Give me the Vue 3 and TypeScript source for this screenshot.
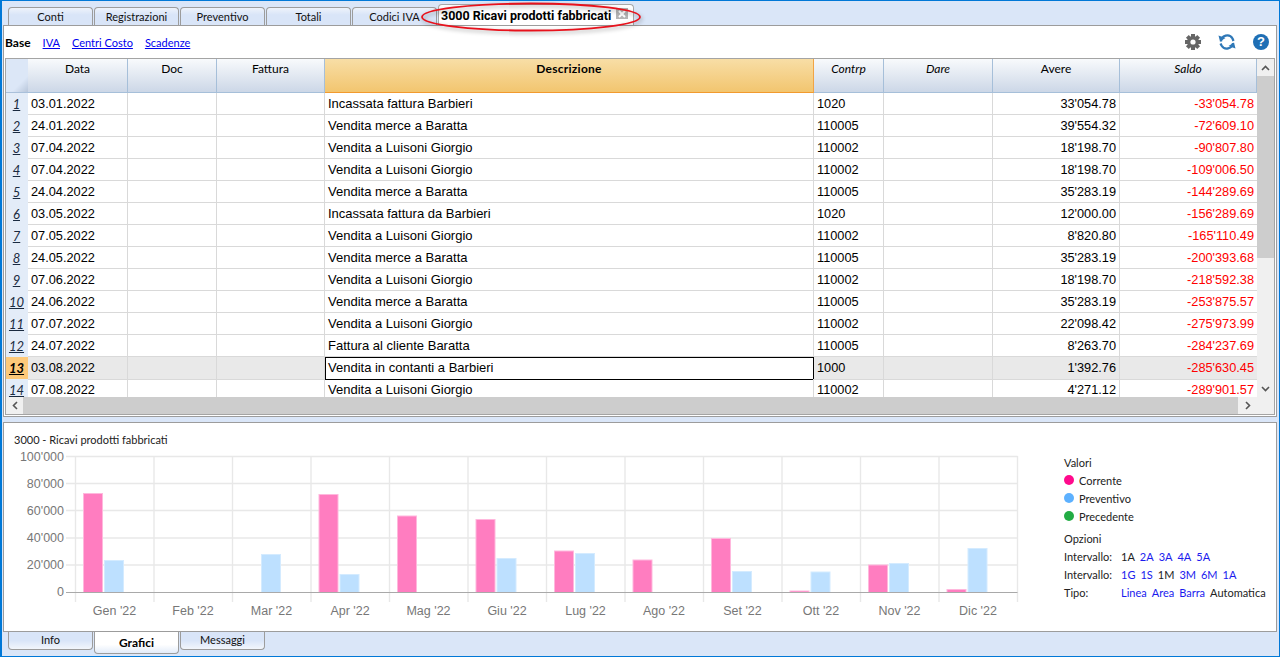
<script setup lang="ts">
const tabs = ['Conti', 'Registrazioni', 'Preventivo', 'Totali', 'Codici IVA']
const bottomTabs = ['Info', 'Grafici', 'Messaggi']

const columns = [
  { label: 'Data', cls: '' },
  { label: 'Doc', cls: '' },
  { label: 'Fattura', cls: '' },
  { label: 'Descrizione', cls: 'desc' },
  { label: 'Contrp', cls: 'ital' },
  { label: 'Dare', cls: 'ital' },
  { label: 'Avere', cls: '' },
  { label: 'Saldo', cls: 'ital' },
]

const rows = [
  ['03.01.2022', 'Incassata fattura Barbieri', '1020', "33'054.78", "-33'054.78"],
  ['24.01.2022', 'Vendita merce a Baratta', '110005', "39'554.32", "-72'609.10"],
  ['07.04.2022', 'Vendita a Luisoni Giorgio', '110002', "18'198.70", "-90'807.80"],
  ['07.04.2022', 'Vendita a Luisoni Giorgio', '110002', "18'198.70", "-109'006.50"],
  ['24.04.2022', 'Vendita merce a Baratta', '110005', "35'283.19", "-144'289.69"],
  ['03.05.2022', 'Incassata fattura da Barbieri', '1020', "12'000.00", "-156'289.69"],
  ['07.05.2022', 'Vendita a Luisoni Giorgio', '110002', "8'820.80", "-165'110.49"],
  ['24.05.2022', 'Vendita merce a Baratta', '110005', "35'283.19", "-200'393.68"],
  ['07.06.2022', 'Vendita a Luisoni Giorgio', '110002', "18'198.70", "-218'592.38"],
  ['24.06.2022', 'Vendita merce a Baratta', '110005', "35'283.19", "-253'875.57"],
  ['07.07.2022', 'Vendita a Luisoni Giorgio', '110002', "22'098.42", "-275'973.99"],
  ['24.07.2022', 'Fattura al cliente Baratta', '110005', "8'263.70", "-284'237.69"],
  ['03.08.2022', 'Vendita in contanti a Barbieri', '1000', "1'392.76", "-285'630.45"],
  ['07.08.2022', 'Vendita a Luisoni Giorgio', '110002', "4'271.12", "-289'901.57"],
]

// chart uses page coordinates through the svg viewBox
const baseY = 593.5
const months = [
  { name: "Gen '22", pink: 494.5, blue: 561.5 },
  { name: "Feb '22", pink: 0, blue: 0 },
  { name: "Mar '22", pink: 0, blue: 555.5 },
  { name: "Apr '22", pink: 495.5, blue: 575.5 },
  { name: "Mag '22", pink: 517, blue: 0 },
  { name: "Giu '22", pink: 520.5, blue: 559.5 },
  { name: "Lug '22", pink: 552, blue: 554.5 },
  { name: "Ago '22", pink: 561, blue: 0 },
  { name: "Set '22", pink: 539.5, blue: 572.5 },
  { name: "Ott '22", pink: 592, blue: 573 },
  { name: "Nov '22", pink: 566, blue: 564.5 },
  { name: "Dic '22", pink: 590.5, blue: 549.5 },
]
const yTicks = [
  { label: "100'000", y: 457.5 },
  { label: "80'000", y: 484.5 },
  { label: "60'000", y: 511.5 },
  { label: "40'000", y: 539 },
  { label: "20'000", y: 566 },
]
const gridX = Array.from({ length: 13 }, (_, i) => 75.5 + 78.5 * i)
</script>

<template>
  <div class="app">
    <div class="tabs">
      <div v-for="t in tabs" :key="t" class="tab">{{ t }}</div>
      <div class="tab active">
        <span>3000 Ricavi prodotti fabbricati</span>
        <span class="close">
          <svg width="8" height="8" viewBox="0 0 8 8"><path d="M1 1l6 6M7 1l-6 6" stroke="#fff" stroke-width="2" /></svg>
        </span>
      </div>
    </div>

    <div class="panel top">
      <div class="toolbar">
        <b>Base</b>
        <a class="link">IVA</a>
        <a class="link">Centri Costo</a>
        <a class="link">Scadenze</a>
        <div class="icons">
          <svg width="18" height="18" viewBox="0 0 18 18">
            <g fill="#666">
              <circle cx="9" cy="9" r="6" />
              <rect x="7" y="1" width="4" height="16" />
              <rect x="7" y="1" width="4" height="16" transform="rotate(45 9 9)" />
              <rect x="7" y="1" width="4" height="16" transform="rotate(90 9 9)" />
              <rect x="7" y="1" width="4" height="16" transform="rotate(135 9 9)" />
            </g>
            <circle cx="9" cy="9" r="2.6" fill="#fff" />
          </svg>
          <svg width="18" height="18" viewBox="0 0 18 18">
            <g fill="none" stroke="#2f78b7" stroke-width="2.3">
              <path d="M3 8.5A6.2 6.2 0 0 1 14.5 5.5L15.5 8" />
              <path d="M15 10A6.2 6.2 0 0 1 3.5 12.5L2.5 10.5" />
            </g>
            <path d="M0.5 2.5L7.5 5L2 8.5Z M17.5 15.5L10.5 13L16 9.5Z" fill="#2f78b7" />
          </svg>
          <span class="help">?</span>
        </div>
      </div>

      <div class="table">
        <div class="table-main">
          <div class="viewport">
            <div class="row head">
              <div class="corner"></div>
              <div v-for="c in columns" :key="c.label" class="hcell" :class="c.cls">{{ c.label }}</div>
            </div>
            <div v-for="(r, i) in rows" :key="i" class="row" :class="{ current: i === 12 }">
              <div class="rownum">{{ i + 1 }}</div>
              <div class="cell">{{ r[0] }}</div>
              <div class="cell"></div>
              <div class="cell"></div>
              <div class="cell text" :class="{ focus: i === 12 }">{{ r[1] }}</div>
              <div class="cell">{{ r[2] }}</div>
              <div class="cell"></div>
              <div class="cell num">{{ r[3] }}</div>
              <div class="cell num neg">{{ r[4] }}</div>
            </div>
          </div>
          <div class="vscroll">
            <div class="arrow">
              <svg width="9" height="6" viewBox="0 0 9 6"><path d="M1 5l3.5-3.5L8 5" fill="none" stroke="#555" stroke-width="1.6" /></svg>
            </div>
            <div class="vtrack"><div class="vthumb"></div></div>
            <div class="arrow">
              <svg width="9" height="6" viewBox="0 0 9 6"><path d="M1 1l3.5 3.5L8 1" fill="none" stroke="#555" stroke-width="1.6" /></svg>
            </div>
          </div>
        </div>
        <div class="hscroll">
          <div class="arrow">
            <svg width="6" height="9" viewBox="0 0 6 9"><path d="M5 1L1.5 4.5 5 8" fill="none" stroke="#555" stroke-width="1.6" /></svg>
          </div>
          <div class="hthumb"></div>
          <div class="arrow wide">
            <svg width="6" height="9" viewBox="0 0 6 9"><path d="M1 1l3.5 3.5L1 8" fill="none" stroke="#555" stroke-width="1.6" /></svg>
          </div>
          <div class="scroll-corner"></div>
        </div>
      </div>
    </div>

    <div class="panel chart-panel">
      <div class="chart-col">
        <div class="chart-title">3000 - Ricavi prodotti fabbricati</div>
        <svg class="chart" width="1046" height="180" viewBox="4 450 1046 180">
          <line v-for="t in yTicks" :key="t.y" x1="66" :x2="1017.5" :y1="t.y" :y2="t.y" class="grid" />
          <line v-for="x in gridX" :key="x" :x1="x" :x2="x" y1="457" y2="603" class="grid" />
          <text v-for="t in yTicks" :key="t.label" x="64" :y="t.y + 4" text-anchor="end" class="axis">{{ t.label }}</text>
          <text x="64" :y="baseY + 3" text-anchor="end" class="axis">0</text>
          <g v-for="(m, i) in months" :key="m.name">
            <rect v-if="m.pink" :x="gridX[i] + 8" :y="m.pink" width="19" :height="baseY - m.pink" class="pink" />
            <rect v-if="m.blue" :x="gridX[i] + 29" :y="m.blue" width="19" :height="baseY - m.blue" class="blue" />
            <text :x="gridX[i] + 39" y="615.5" text-anchor="middle" class="axis">{{ m.name }}</text>
          </g>
          <line x1="66" x2="1017.5" :y1="baseY" :y2="baseY" class="zero" />
        </svg>
      </div>
      <div class="legend">
        <div class="lrow">Valori</div>
        <div class="lrow"><i class="dot" style="background: #ff0a8c"></i>Corrente</div>
        <div class="lrow"><i class="dot" style="background: #5db1ff"></i>Preventivo</div>
        <div class="lrow"><i class="dot" style="background: #22ac44"></i>Precedente</div>
        <div class="lrow opz">Opzioni</div>
        <div class="lrow">
          <span class="lbl">Intervallo:</span>
          <span class="opts"><span>1A</span><a>2A</a><a>3A</a><a>4A</a><a>5A</a></span>
        </div>
        <div class="lrow">
          <span class="lbl">Intervallo:</span>
          <span class="opts"><a>1G</a><a>1S</a><span>1M</span><a>3M</a><a>6M</a><a>1A</a></span>
        </div>
        <div class="lrow">
          <span class="lbl">Tipo:</span>
          <span class="opts"><a>Linea</a><a>Area</a><a>Barra</a><span>Automatica</span></span>
        </div>
      </div>
    </div>

    <div class="tabs bottom">
      <div v-for="t in bottomTabs" :key="t" class="btab" :class="{ active: t === 'Grafici' }">{{ t }}</div>
    </div>

    <svg class="ring" width="224" height="32" viewBox="0 0 224 32">
      <ellipse cx="110" cy="16" rx="109" ry="13.5" fill="none" stroke="#e8121c" stroke-width="1.8" />
    </svg>
  </div>
</template>

<style scoped>
.app {
  position: relative;
  width: 1280px;
  height: 657px;
  box-sizing: border-box;
  border: 1px solid #0078d7;
  border-left-width: 2px;
  background: #dae6f8;
  overflow: hidden;
  font: 11px Lato, sans-serif;
  color: #111;
  display: flex;
  flex-direction: column;
}
.tabs {
  display: flex;
  align-items: flex-end;
  gap: 1px;
  height: 24px;
  padding-left: 6px;
}
.tab {
  box-sizing: border-box;
  width: 85px;
  height: 18px;
  border: 1px solid #9c9c9c;
  border-bottom: 0;
  border-radius: 4px 4px 0 0;
  background: linear-gradient(#eef3fb, #d9e5f8 40%);
  text-align: center;
  line-height: 18px;
}
.tab.active {
  width: 196px;
  height: 21px;
  background: #fff;
  display: flex;
  align-items: center;
  justify-content: space-between;
  padding: 0 5px 0 2px;
  font: 700 12.5px Roboto, sans-serif;
  white-space: nowrap;
  border-color: #a8a8a8;
  color: #000;
}
.close {
  width: 12px;
  height: 11px;
  background: #b4b4b4;
  display: flex;
  align-items: center;
  justify-content: center;
  flex: none;
  margin-bottom: 3px;
}
.panel {
  box-sizing: border-box;
  margin-left: 1px;
  width: 1274px;
  border: 1px solid #9c9c9c;
  background: #fff;
}
.panel.top {
  height: 392px;
  padding: 0 1px;
}
.toolbar {
  height: 32px;
  display: flex;
  align-items: center;
  gap: 12px;
}
.toolbar b {
  font-size: 12px;
  color: #000;
}
.link {
  color: #0000ee;
  text-decoration: underline;
}
.icons {
  margin-left: auto;
  display: flex;
  align-items: center;
  gap: 16px;
  padding-right: 6px;
}
.help {
  width: 16px;
  height: 16px;
  margin-left: 1px;
  border-radius: 50%;
  background: #1f6fb5;
  color: #fff;
  font: 700 13px/16px "Liberation Sans", sans-serif;
  text-align: center;
}
.table {
  box-sizing: border-box;
  width: 1270px;
  height: 357px;
  border: 1px solid #a4a4a4;
  display: flex;
  flex-direction: column;
}
.table-main {
  display: flex;
  height: 338px;
}
.viewport {
  width: 1251px;
  overflow: hidden;
}
.row {
  display: grid;
  grid-template-columns: 22px 100px 89px 108px 489px 70px 109px 127px 137px;
  height: 22px;
  font: 12.75px/21px "Liberation Sans", sans-serif;
  color: #000;
}
.row.head {
  height: 34px;
  font: 12px/20px Lato, sans-serif;
}
.corner {
  border-bottom: 1px solid #a9c0da;
  background: linear-gradient(135deg, #dce7f7 70%, #b8c6da);
}
.hcell {
  box-sizing: border-box;
  height: 34px;
  text-align: center;
  background: linear-gradient(#f8fafc, #ccd7e7);
  border-right: 1px solid #a6bfd9;
  border-bottom: 1px solid #a6bfd9;
}
.hcell.ital {
  font-style: italic;
}
.hcell.desc {
  letter-spacing: 0.25px;
  font-weight: 700;
  background: linear-gradient(#f8dea6, #f2c56f);
  border-right-color: #f1a445;
  border-bottom-color: #f29a2e;
}
.rownum {
  box-sizing: border-box;
  background: #e3ecf8;
  font: italic 13px/22px Lato, sans-serif;
  text-decoration: underline;
  text-align: center;
  color: #1a2a40;
  padding-right: 1px;
}
.cell {
  box-sizing: border-box;
  padding: 0 3px;
  border-right: 1px solid #d9d9d9;
  border-bottom: 1px solid #d9d9d9;
  white-space: nowrap;
  overflow: hidden;
}
.cell.text {
  font-size: 13px;
}
.num {
  text-align: right;
}
.neg {
  color: #ff0000;
  border-right: 0;
}
.current .cell {
  background: #e9e9e9;
}
.current .rownum {
  background: #fdc97a;
  border-bottom: 1px solid #f19a2e;
  font-weight: 700;
  color: #000;
}
.current .focus {
  background: #fff;
  border: 1px solid #000;
  line-height: 19px;
  padding: 0 2px;
}
.vscroll {
  width: 17px;
  background: #f0f0f0;
  display: flex;
  flex-direction: column;
}
.arrow {
  height: 17px;
  width: 17px;
  flex: none;
  display: flex;
  align-items: center;
  justify-content: center;
}
.arrow.wide {
  width: 19px;
}
.vtrack {
  flex: 1;
}
.vthumb {
  height: 182px;
  background: #cdcdcd;
}
.hscroll {
  height: 17px;
  display: flex;
  background: #f0f0f0;
}
.hthumb {
  flex: 1;
  background: #cdcdcd;
}
.scroll-corner {
  width: 17px;
}
.chart-panel {
  margin-top: 5px;
  height: 210px;
  display: flex;
}
.chart-col {
  width: 1060px;
}
.chart-title {
  height: 26px;
  padding: 9px 0 0 10px;
  box-sizing: border-box;
  line-height: 16px;
  color: #222;
}
.chart {
  display: block;
  font-family: "Liberation Sans", sans-serif;
}
.grid {
  stroke: #e8e8e8;
  stroke-width: 1.4;
}
.zero {
  stroke: #a9a9a9;
  stroke-width: 1.2;
}
.axis {
  font-size: 12.5px;
  fill: #777;
}
.pink {
  fill: #ff7dc0;
  stroke: #ffb8dd;
  stroke-width: 1;
}
.blue {
  fill: #bde0ff;
  stroke: #d4ebff;
  stroke-width: 1;
}
.legend {
  padding-top: 30px;
  color: #222;
  white-space: nowrap;
}
.lrow {
  display: flex;
  align-items: center;
  height: 18px;
}
.lrow.opz {
  margin-top: 4px;
}
.dot {
  width: 10px;
  height: 10px;
  border-radius: 50%;
  margin-right: 5px;
}
.lbl {
  width: 57px;
}
.opts {
  display: flex;
  gap: 5px;
}
.opts a {
  color: #1a1aee;
}
.tabs.bottom {
  height: auto;
  align-items: flex-start;
}
.btab {
  box-sizing: border-box;
  width: 85px;
  height: 18px;
  border: 1px solid #9c9c9c;
  border-top: 0;
  border-radius: 0 0 4px 4px;
  background: linear-gradient(#d9e5f8 50%, #f2f6fc);
  text-align: center;
  line-height: 16px;
}
.btab.active {
  height: 22px;
  background: linear-gradient(#fff 60%, #e3ecf9);
  font-size: 12px;
  font-weight: 700;
  line-height: 22px;
  color: #000;
}
.ring {
  position: absolute;
  left: 419px;
  top: 0;
  filter: drop-shadow(1px 2px 2px rgba(0, 0, 0, 0.35));
  overflow: visible;
}
</style>

<style>
html,
body {
  margin: 0;
  overflow: hidden;
}
</style>
